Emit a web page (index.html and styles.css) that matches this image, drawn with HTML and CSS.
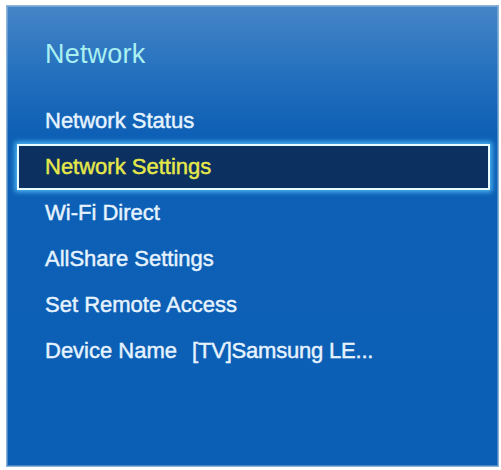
FILE: index.html
```html
<!DOCTYPE html>
<html>
<head>
<meta charset="utf-8">
<link rel="stylesheet" href="styles.css">
</head>
<body>
<div class="panel">
  <div class="title">Network</div>
  <ul class="menu">
    <li class="item">Network Status</li>
    <li class="item selected">Network Settings</li>
    <li class="item">Wi-Fi Direct</li>
    <li class="item">AllShare Settings</li>
    <li class="item">Set Remote Access</li>
    <li class="item">Device Name<span class="value">[TV]Samsung LE...</span></li>
  </ul>
</div>
</body>
</html>
```
FILE: styles.css
```css
html, body {
  margin: 0;
  padding: 0;
  background: #ffffff;
}
body {
  width: 501px;
  height: 470px;
  overflow: hidden;
  font-family: "Liberation Sans", Arial, sans-serif;
}
.panel {
  box-sizing: border-box;
  margin: 5px 0 0 6px;
  width: 493px;
  height: 462px;
  border: 1px solid #8fb3d6;
  background: linear-gradient(to bottom, #4585c6 0%, #2a74c0 12%, #1766b8 22%, #0d60b5 28%, #0b5fb4 100%);
  box-shadow: inset 0 0 0 1px rgba(255,255,255,0.25);
}
.title {
  margin-top: 33px;
  padding-left: 38px;
  height: 30px;
  line-height: 30px;
  font-size: 27px;
  letter-spacing: 0.2px;
  color: #a9f0f2;
}
.menu {
  list-style: none;
  margin: 29px 0 0 0;
  padding: 0;
}
.item {
  box-sizing: border-box;
  margin: 0 8px 0 10px;
  height: 46px;
  line-height: 42px;
  padding-left: 26px;
  border: 2px solid transparent;
  font-size: 22px;
  -webkit-text-stroke: 0.45px currentColor;
  color: #e6f3ff;
  white-space: nowrap;
}
.value {
  margin-left: 15px;
  letter-spacing: -0.2px;
}
.item.selected {
  background: #0c3060;
  border-color: #e8fbff;
  color: #e6e84a;
  box-shadow: 0 0 5px 2px rgba(90, 200, 255, 0.85);
}
```
